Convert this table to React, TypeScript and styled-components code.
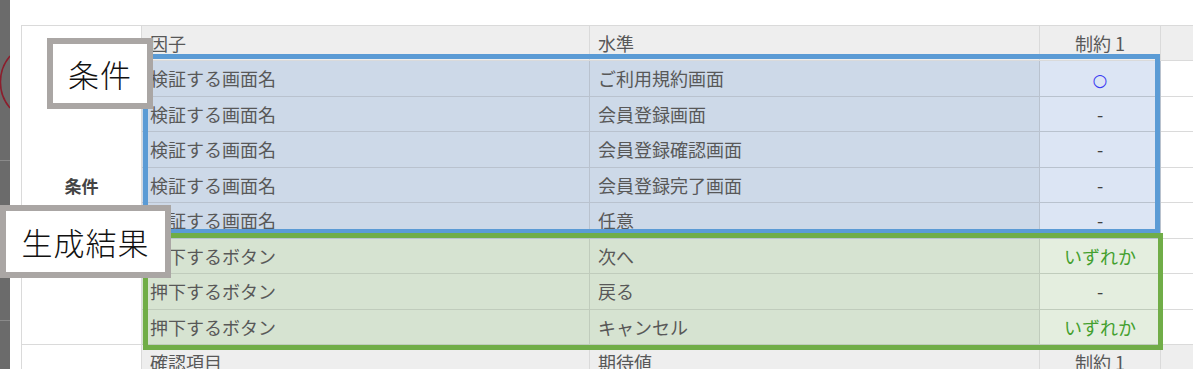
import styled, { createGlobalStyle } from 'styled-components';

const GlobalStyle = createGlobalStyle`
  html, body {
    margin: 0;
    padding: 0;
    background: #ffffff;
    overflow: hidden;
  }
  body {
    font-family: "Noto Sans CJK JP", "Noto Sans", sans-serif;
  }
`;

type Tone = 'plain' | 'blue' | 'green';

const cellBg: Record<Tone, [string, string]> = {
  plain: ['#ffffff', '#ffffff'],
  blue: ['#cdd9e8', '#dce5f4'],
  green: ['#d6e3d1', '#e4eedf'],
};

const cellLine: Record<Tone, string> = {
  plain: '#dadada',
  blue: '#b9c2ce',
  green: '#c0ccbc',
};

const Page = styled.div`
  position: relative;
  display: flex;
  width: 1193px;
  height: 369px;
  overflow: hidden;
`;

const SideStrip = styled.div`
  flex: 0 0 10px;
  height: 100%;
  background: #6b6b6b;
  display: flex;
  flex-direction: column;
  svg {
    display: block;
  }
`;

const StripSection = styled.div<{ $h: number }>`
  height: ${(p) => p.$h}px;
  border-bottom: 1px solid #8a8a8a;
  flex: 0 0 auto;
`;

const Canvas = styled.div`
  flex: 1;
  padding: 25px 0 0 11px;
`;

const Sheet = styled.table`
  border-collapse: collapse;
  table-layout: fixed;
  width: 1199px;
  border-top: 1px solid #dadada;
  border-left: 1px solid #dadada;
  color: #585858;
  font-size: 18px;
`;

const Row = styled.tr<{ $h: number }>`
  height: ${(p) => p.$h}px;
`;

const Category = styled.td`
  background: #ffffff;
  border: 1px solid #dadada;
  text-align: center;
  vertical-align: middle;
  font-size: 17px;
  font-weight: 700;
  color: #444444;
`;

const HeadCell = styled.td<{ $center?: boolean }>`
  background: #eeeeee;
  border: 1px solid #dadada;
  padding: 0 8px;
  text-align: ${(p) => (p.$center ? 'center' : 'left')};
  white-space: nowrap;
  overflow: hidden;
`;

const Cell = styled.td<{ $tone: Tone; $accent?: boolean; $center?: boolean }>`
  background: ${(p) => cellBg[p.$tone][p.$accent ? 1 : 0]};
  border: 1px solid ${(p) => cellLine[p.$tone]};
  padding: 0 8px;
  text-align: ${(p) => (p.$center ? 'center' : 'left')};
  white-space: nowrap;
  overflow: hidden;
`;

const Mark = styled.span<{ $kind: 'circle' | 'any' | 'none' }>`
  color: ${(p) => (p.$kind === 'circle' ? '#3a3af2' : p.$kind === 'any' ? '#43a02e' : '#404040')};
  ${(p) =>
    p.$kind === 'circle' &&
    `
    font-family: "DejaVu Sans", sans-serif;
    font-size: 17px;
  `}
`;

const Frame = styled.div<{ $color: string; $x: number; $y: number; $w: number; $h: number }>`
  position: absolute;
  left: ${(p) => p.$x}px;
  top: ${(p) => p.$y}px;
  width: ${(p) => p.$w}px;
  height: ${(p) => p.$h}px;
  box-sizing: border-box;
  border: 5px solid ${(p) => p.$color};
  pointer-events: none;
`;

const Callout = styled.div<{ $x: number; $y: number; $w: number; $h: number }>`
  position: absolute;
  left: ${(p) => p.$x}px;
  top: ${(p) => p.$y}px;
  width: ${(p) => p.$w}px;
  height: ${(p) => p.$h}px;
  box-sizing: border-box;
  border: 6px solid #aaa6a4;
  background: #ffffff;
  display: flex;
  align-items: center;
  justify-content: center;
  font-size: 31px;
  font-weight: 300;
  color: #111111;
  letter-spacing: 1px;
`;

type Line = { factor: string; level: string; mark: string; tone: Tone };

const lines: Line[] = [
  { factor: '検証する画面名', level: 'ご利用規約画面', mark: '○', tone: 'blue' },
  { factor: '検証する画面名', level: '会員登録画面', mark: '-', tone: 'blue' },
  { factor: '検証する画面名', level: '会員登録確認画面', mark: '-', tone: 'blue' },
  { factor: '検証する画面名', level: '会員登録完了画面', mark: '-', tone: 'blue' },
  { factor: '検証する画面名', level: '任意', mark: '-', tone: 'blue' },
  { factor: '押下するボタン', level: '次へ', mark: 'いずれか', tone: 'green' },
  { factor: '押下するボタン', level: '戻る', mark: '-', tone: 'green' },
  { factor: '押下するボタン', level: 'キャンセル', mark: 'いずれか', tone: 'green' },
];

const markKind = (m: string) => (m === '○' ? 'circle' : m === '-' ? 'none' : 'any');

export default function App() {
  return (
    <>
      <GlobalStyle />
      <Page>
        <SideStrip>
          <StripSection $h={160}>
            <svg width="10" height="160" viewBox="0 0 10 160">
              <path d="M10 56 A40 40 0 0 0 10 108" fill="none" stroke="#8c1d2c" strokeWidth="1.6" />
            </svg>
          </StripSection>
          <StripSection $h={159} />
        </SideStrip>
        <Canvas>
          <Sheet>
            <colgroup>
              <col style={{ width: 120 }} />
              <col style={{ width: 448 }} />
              <col style={{ width: 450 }} />
              <col style={{ width: 121 }} />
              <col style={{ width: 60 }} />
            </colgroup>
            <tbody>
              <Row $h={35}>
                <Category rowSpan={9}>条件</Category>
                <HeadCell>因子</HeadCell>
                <HeadCell>水準</HeadCell>
                <HeadCell $center>制約 1</HeadCell>
                <HeadCell />
              </Row>
              {lines.map((l, i) => (
                <Row $h={35.5} key={i}>
                  <Cell $tone={l.tone}>{l.factor}</Cell>
                  <Cell $tone={l.tone}>{l.level}</Cell>
                  <Cell $tone={l.tone} $accent $center>
                    <Mark $kind={markKind(l.mark)}>{l.mark}</Mark>
                  </Cell>
                  <Cell $tone="plain" />
                </Row>
              ))}
              <Row $h={35}>
                <Category />
                <HeadCell>確認項目</HeadCell>
                <HeadCell>期待値</HeadCell>
                <HeadCell $center>制約 1</HeadCell>
                <HeadCell />
              </Row>
            </tbody>
          </Sheet>
        </Canvas>

        <Frame $color="#5b9bd5" $x={143} $y={54} $w={1017} $h={180} />
        <Frame $color="#70ad47" $x={143} $y={233} $w={1020} $h={117} />
        <Callout $x={47} $y={38} $w={106} $h={71}>
          条件
        </Callout>
        <Callout $x={0} $y={205} $w={171} $h={73}>
          生成結果
        </Callout>
      </Page>
    </>
  );
}
